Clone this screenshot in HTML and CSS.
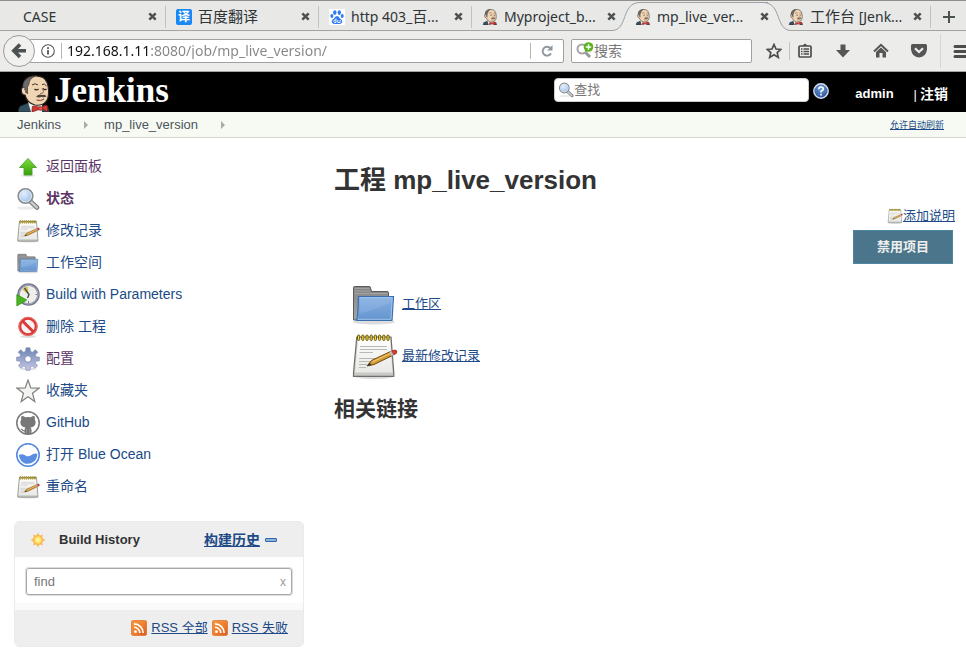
FILE: index.html
```html
<!DOCTYPE html>
<html lang="zh-CN">
<head>
<meta charset="utf-8">
<title>mp_live_version [Jenkins]</title>
<link rel="stylesheet" href="styles.css">
</head>
<body>
<svg class="defs" aria-hidden="true">
  <defs>
    <linearGradient id="g-green" x1="0" y1="0" x2="0" y2="1"><stop offset="0" stop-color="#7fdc3a"/><stop offset="1" stop-color="#37a00c"/></linearGradient>
    <linearGradient id="g-blue" x1="0" y1="0" x2="0" y2="1"><stop offset="0" stop-color="#86afdf"/><stop offset="1" stop-color="#6495cf"/></linearGradient>
    <linearGradient id="g-grey" x1="0" y1="0" x2="0" y2="1"><stop offset="0" stop-color="#858585"/><stop offset="1" stop-color="#a5a5a5"/></linearGradient>
    <linearGradient id="g-paper" x1="0" y1="0" x2="0" y2="1"><stop offset="0" stop-color="#fff"/><stop offset="1" stop-color="#e8e8e6"/></linearGradient>
    <linearGradient id="g-gear" gradientUnits="userSpaceOnUse" x1="0" y1="2" x2="0" y2="22"><stop offset="0" stop-color="#6f87b5"/><stop offset="1" stop-color="#c3c3e4"/></linearGradient>
    <linearGradient id="g-rss" x1="0" y1="0" x2="1" y2="1"><stop offset="0" stop-color="#f29a45"/><stop offset=".5" stop-color="#ef8130"/><stop offset="1" stop-color="#d9581f"/></linearGradient>
    <radialGradient id="g-lens" cx=".4" cy=".35" r=".7"><stop offset="0" stop-color="#e4f0ff"/><stop offset="1" stop-color="#94bbe8"/></radialGradient>
    <radialGradient id="g-sun"><stop offset="0" stop-color="#fffbc0"/><stop offset="1" stop-color="#fbd440"/></radialGradient>
    <radialGradient id="g-help" cx=".5" cy=".3" r=".8"><stop offset="0" stop-color="#6f9ad8"/><stop offset="1" stop-color="#204a8c"/></radialGradient>
  </defs>

  <symbol id="jenkins" viewBox="0 0 32 37">
    <path d="M0 37 L1.500 31.500 L10 28 L16 33 L24 30 L30 32 L31.500 37Z" fill="#335061" stroke="#1b2730" stroke-width=".8"/>
    <path d="M10 27 L13 37 H24 L24 30Z" fill="#f4f4f0"/>
    <path d="M5 12 Q5 4 11 2 Q18 -.5 25 2.500 Q30 6 30.500 15 Q31 24 27.500 27 Q24 31 17 30 Q9 28 7 20 Q3.500 20 3.500 16 Q3 13 5 12Z" fill="#efd5b4" stroke="#2d2622" stroke-width="1.100"/>
    <path d="M4.500 13 Q4.500 5 12 2 Q15 1 17 1.200 Q11 4 11 9 L9.500 12 L9.500 19 L7.500 16 L6.500 12Z" fill="#6d6b6d" stroke="#2d2622" stroke-width=".6"/>
    <path d="M6 14 Q8 15 7.500 18" fill="none" stroke="#9c6f53"/>
    <path d="M14 10 Q17 7.500 20 10 M24 9.500 Q26.500 8 28.500 11" fill="none" stroke="#4a3529" stroke-width="1"/>
    <path d="M16.500 14 Q18.500 16 20.500 13.800 M25 13.500 Q27 15.500 28.500 13.800" fill="none" stroke="#2b211c" stroke-width="1.200"/>
    <path d="M24 13 Q26.500 17 25 18 L22 18.500" fill="none" stroke="#a57356"/>
    <path d="M18 21.500 Q21.500 18.500 24 20 Q27.500 19 28.500 21.500 Q26 23 23.500 21.700 Q21 23.300 18 21.500Z" fill="#4d433c"/>
    <path d="M18.500 25 Q23 26.500 26 24" fill="none" stroke="#7e3b2f"/>
    <path d="M15.500 31 Q14 30 14 37 L21 34.500 L23.500 33 L29 37 Q30.500 30 28 30 L23 32.500Z" fill="#d33833" stroke="#7b1b18" stroke-width=".7"/>
    <circle cx="22.500" cy="33.500" r="2" fill="#e9534d" stroke="#7b1b18" stroke-width=".5"/>
  </symbol>

  <symbol id="close" viewBox="0 0 9 9"><path d="M1.300 1.300 L7.700 7.700 M7.700 1.300 L1.300 7.700" stroke="#4c5152" stroke-width="2.500" fill="none"/></symbol>

  <symbol id="lens" viewBox="0 0 24 24">
    <ellipse cx="10" cy="21" rx="9" ry="1.800" fill="#ececec"/>
    <path d="M14.500 14.500 L21 20.500" stroke="#777b7b" stroke-width="4.500" stroke-linecap="round"/>
    <path d="M14.500 14.500 L20.800 20.300" stroke="#c9cccc" stroke-width="2.500" stroke-linecap="round"/>
    <circle cx="9.500" cy="9" r="7.200" fill="url(#g-lens)" stroke="#888b8b" stroke-width="1.800"/>
    <circle cx="9.500" cy="9" r="6" fill="none" stroke="#f0f4f8" stroke-width=".8"/>
  </symbol>

  <symbol id="notepad" viewBox="0 0 48 48">
    <ellipse cx="24" cy="45" rx="18" ry="2" fill="#ddd"/>
    <path d="M6.800 5 H41 L43.800 41 V44.300 H3.500 V41Z" fill="#c9c9c6" stroke="#6f6f69" stroke-width="1.200"/>
    <path d="M8 6 H40 L42.500 40.500 H5Z" fill="url(#g-paper)"/>
    <path d="M10 14.500H37 M10 17.500H37 M9.500 20.500H23 M9 26.500H29 M9 29.500H23 M9 32.500H17 M9 35.500H16" stroke="#b8b8b4"/>
    <g fill="#efd43b" stroke="#6b5c10" stroke-width="1">
      <rect x="7.500" y="3" width="2.200" height="5.500" rx="1.100"/><rect x="11.700" y="3" width="2.200" height="5.500" rx="1.100"/>
      <rect x="15.900" y="3" width="2.200" height="5.500" rx="1.100"/><rect x="20.100" y="3" width="2.200" height="5.500" rx="1.100"/>
      <rect x="24.300" y="3" width="2.200" height="5.500" rx="1.100"/><rect x="28.500" y="3" width="2.200" height="5.500" rx="1.100"/>
      <rect x="32.700" y="3" width="2.200" height="5.500" rx="1.100"/><rect x="36.900" y="3" width="2.200" height="5.500" rx="1.100"/>
    </g>
    <path d="M17 34 L21.500 28.500 L40.500 19.500 L42.500 23.500 L24 32.500Z" fill="#d39a38" stroke="#6f4a12"/>
    <path d="M22.500 29.800 L40.800 21" stroke="#f0c36c" stroke-width="1.300"/>
    <path d="M17 34 L19.500 30.800 L21.500 33Z" fill="#3a2c1a"/>
    <path d="M41.500 19 Q46 17 46.800 19 Q47.600 21.500 43.500 23Z" fill="#dc3b2f" stroke="#8d2019" stroke-width=".7"/>
    <path d="M39.500 20 L41.500 19 L43.500 23 L41.500 24Z" fill="#b9c0c2"/>
  </symbol>

  <symbol id="folder" viewBox="0 0 48 48">
    <ellipse cx="24" cy="42" rx="21" ry="2.500" fill="#ddd"/>
    <path d="M3.500 40 V7.500 Q3.500 6.500 4.500 6.500 H19.500 Q20.500 6.500 20.500 8 L21.500 11.500 H37 Q38.500 11.500 38.500 13 V40Z" fill="url(#g-grey)" stroke="#5a5a5a"/>
    <path d="M4.500 8.500H19.500 M4.500 11H20 M4.500 13.500H37.500" stroke="#a8a8a8" stroke-width=".8"/>
    <path d="M8.500 16.500 H43.500 L42 40.500 H6 Q7.800 40 8.500 16.500Z" fill="url(#g-blue)" stroke="#3a6eae" stroke-width="1.200"/>
    <path d="M9.600 17.700 H42.200 L41 39.300 H8" fill="none" stroke="#a9c9ee" stroke-width=".8"/>
    <path d="M9.500 33 Q24 31 41.500 22 V18 H10Z" fill="#a2c3ea" opacity=".3"/>
  </symbol>

  <symbol id="up" viewBox="0 0 24 24">
    <ellipse cx="12" cy="20.500" rx="7" ry="1.500" fill="#e4e4e4"/>
    <path d="M12 3.500 L20.500 12.500 H16 V20 H8 V12.500 H3.500Z" fill="url(#g-green)" stroke="#4a9e2a" stroke-width=".9"/>
  </symbol>

  <symbol id="clock" viewBox="0 0 24 24">
    <circle cx="12.500" cy="11.500" r="10" fill="#eeeeea" stroke="#77778f" stroke-width="2.500"/>
    <circle cx="12.500" cy="11.500" r="9.500" fill="none" stroke="#b6b6cc" stroke-width=".8"/>
    <path d="M12.500 11.500 L6 6.500 A8 8 0 0 1 12 3.500Z" fill="#d7c65e"/>
    <path d="M8.500 5 L13 11.500 L11.500 15" fill="none" stroke="#4c4c43" stroke-width="1.400"/>
    <path d="M19.500 11.500h1.500 M12.500 18v2" stroke="#777"/>
    <path d="M.8 11.500 L10.800 17 L.8 23Z" fill="#48b51f" stroke="#2f8d10" stroke-width=".7"/>
  </symbol>

  <symbol id="deny" viewBox="0 0 24 24">
    <ellipse cx="12" cy="21.500" rx="8" ry="1.500" fill="#ddd"/>
    <circle cx="12" cy="11.500" r="8.200" fill="#f9f4f3" stroke="#d93a37" stroke-width="3"/>
    <path d="M6.200 5.700 L17.800 17.300" stroke="#d93a37" stroke-width="3"/>
    <circle cx="12" cy="11.500" r="9" fill="none" stroke="#ee8885" stroke-width=".7"/>
  </symbol>

  <symbol id="gear" viewBox="0 0 24 24">
    <ellipse cx="12" cy="22" rx="8" ry="1.500" fill="#e2e2e2"/>
    <path d="M10 .8H14L14.500 4.400L16.600 5.200L19.400 2.800L21.800 5.300L19.300 8L19.900 9.800L23.400 10.200V13.800L19.900 14.200L19.200 16L21.600 18.800L19 21.300L16.300 19L14.500 19.700L14 23.200H10L9.500 19.700L7.700 19L5 21.300L2.400 18.800L4.800 16L4.100 14.200L.6 13.800V10.200L4.100 9.800L4.700 8L2.200 5.300L4.600 2.800L7.400 5.200L9.500 4.400Z" fill="url(#g-gear)" stroke="#8490b8" stroke-width=".7"/>
    <circle cx="12" cy="12" r="3.300" fill="#fff" stroke="#7885ad" stroke-width=".9"/>
  </symbol>

  <symbol id="star" viewBox="0 0 24 24"><path d="M12 1 L14.800 9 L23 9.200 L16.500 14.200 L18.800 22.600 L12 17.800 L5.200 22.600 L7.500 14.200 L1 9.200 L9.200 9Z" fill="#f3f3f1" stroke="#7f807c" stroke-width="1.200"/></symbol>

  <symbol id="github" viewBox="0 0 24 24">
    <circle cx="12" cy="12" r="11.200" fill="#fff" stroke="#777" stroke-width="1.500"/>
    <path d="M5.500 5 Q8 5 9.300 6.300 Q12 5.700 14.700 6.300 Q16 5 18.500 5 Q19.200 7 18.700 8.300 Q20 10 19.500 12.500 Q18.800 16 14.500 16.500 Q15.500 17.500 15.500 19 V22.500 Q12 23.500 8.500 22.500 V20.500 Q6 20.500 5.200 18.500 L4.500 17.500 Q6.500 17.500 7 18.800 Q7.500 19.500 8.500 19.200 Q8.500 17.500 9.500 16.500 Q5.200 16 4.500 12.500 Q4 10 5.300 8.300 Q4.800 7 5.500 5Z" fill="#777"/>
    <path d="M10.500 18v4 M13.500 18v4" stroke="#9b9b9b" stroke-width=".7"/>
  </symbol>

  <symbol id="ocean" viewBox="0 0 24 24">
    <circle cx="12" cy="12" r="11.200" fill="#fff" stroke="#4f86dd" stroke-width="1.500"/>
    <path d="M2.800 12 Q6 10.200 9.500 12.500 Q12.500 14.300 15 12.300 Q18 9.800 21.300 10.800 Q21.500 15.500 18 18.600 Q14.500 21.500 9.500 20.700 Q4 19 2.800 12Z" fill="#5b8de2"/>
  </symbol>

  <symbol id="rss" viewBox="0 0 16 16">
    <rect x=".4" y=".4" width="15.200" height="15.200" rx="2" fill="url(#g-rss)" stroke="#e07029" stroke-width=".8"/>
    <circle cx="4.500" cy="11.700" r="1.400" fill="#fff"/>
    <path d="M3 7.300 A5.800 5.800 0 0 1 8.800 13.100 M3 3.900 A9.200 9.200 0 0 1 12.200 13.100" stroke="#fff" stroke-width="1.600" fill="none"/>
  </symbol>
</svg>

<header class="browser">
  <div class="tabs">
    <div class="tab"><button class="tab-title">CASE</button><button class="tab-close" aria-label="关闭"><svg><use href="#close"/></svg></button></div>
    <div class="tab"><span class="fanyi">译</span><button class="tab-title"><span class="cjk">百度翻译</span></button><button class="tab-close" aria-label="关闭"><svg><use href="#close"/></svg></button></div>
    <div class="tab"><svg class="favicon" viewBox="0 0 16 16"><rect width="16" height="16" fill="#fff"/><g fill="#2f7bef"><ellipse cx="5.800" cy="3.600" rx="1.700" ry="2.300"/><ellipse cx="10.300" cy="3.600" rx="1.700" ry="2.300"/><ellipse cx="2.900" cy="7" rx="1.500" ry="2"/><ellipse cx="13.200" cy="7" rx="1.500" ry="2"/><path d="M8 7 Q10 7 11 9.500 Q14 11.500 13 13.800 Q12 15.500 8 14.900 Q4 15.500 3 13.800 Q2 11.500 5 9.500 Q6 7 8 7Z"/></g><path d="M7 9.500v4H5.500q-1.500-1.300 0-2.500H7 M8.800 11v2.500H11.200V11" fill="none" stroke="#fff" stroke-width=".9"/></svg><button class="tab-title">http 403_<span class="cjk">百</span>...</button><button class="tab-close" aria-label="关闭"><svg><use href="#close"/></svg></button></div>
    <div class="tab before-active"><svg class="favicon"><use href="#jenkins"/></svg><button class="tab-title">Myproject_b...</button><button class="tab-close" aria-label="关闭"><svg><use href="#close"/></svg></button></div>
    <div class="tab active">
      <svg class="curve curve-left" viewBox="0 0 28 29"><path d="M0 29 V28.500 C16 28.500 9 .5 28 .5 V29Z" fill="#ececea"/><path d="M0 28.500 C16 28.500 9 .5 28 .5" fill="none" stroke="#9da0a8"/></svg>
      <svg class="curve curve-right" viewBox="0 0 28 29"><path d="M28 29 V28.500 C12 28.500 19 .5 0 .5 V29Z" fill="#ececea"/><path d="M28 28.500 C12 28.500 19 .5 0 .5" fill="none" stroke="#9da0a8"/></svg>
      <svg class="favicon"><use href="#jenkins"/></svg><button class="tab-title">mp_live_ver...</button><button class="tab-close" aria-label="关闭"><svg><use href="#close"/></svg></button></div>
    <div class="tab"><svg class="favicon"><use href="#jenkins"/></svg><button class="tab-title"><span class="cjk">工作台</span> [Jenk...</button><button class="tab-close" aria-label="关闭"><svg><use href="#close"/></svg></button></div>
    <button class="new-tab" aria-label="新标签页"><svg viewBox="0 0 12 12"><path d="M6 0V12M0 6H12" stroke="#4c5152" stroke-width="2"/></svg></button>
  </div>
  <div class="toolbar">
    <button class="back" aria-label="后退"><svg viewBox="0 0 16 16"><path d="M9 1.500 L2.800 7.800 L9 14 M3.500 7.800 H15" fill="none" stroke="#4c5152" stroke-width="3.600"/></svg></button>
    <div class="address">
      <svg class="info" viewBox="0 0 14 14"><circle cx="7" cy="7" r="6.300" fill="none" stroke="#555" stroke-width="1.100"/><path d="M7 6V10.500M7 3.200V4.900" stroke="#444" stroke-width="1.600"/></svg>
      <input class="url" aria-label="地址" value="192.168.1.11:8080/job/mp_live_version/">
      <button class="reload" aria-label="刷新"><svg viewBox="0 0 12 12"><path d="M9.300 3.200 A4.400 4.400 0 1 0 10 8.200" fill="none" stroke="#8f979d" stroke-width="1.900"/><path d="M11.500 0V5.500H6Z" fill="#8f979d"/></svg></button>
    </div>
    <div class="websearch">
      <svg viewBox="0 0 18 18"><path d="M8.500 9.500 L14 15" stroke="#999" stroke-width="3"/><circle cx="6" cy="7" r="4.500" fill="#fff" stroke="#a3a5a5" stroke-width="2"/><circle cx="12.500" cy="5" r="4.800" fill="#55b31c"/><path d="M12.500 2.300V7.700M9.800 5H15.200" stroke="#fff" stroke-width="1.500"/></svg>
      <input aria-label="搜索" placeholder="搜索">
    </div>
    <button class="tool" aria-label="收藏"><svg viewBox="0 0 16 16"><path d="M8 1.500 L10 6 L14.800 6.400 L11.200 9.600 L12.300 14.400 L8 11.800 L3.700 14.400 L4.800 9.600 L1.200 6.400 L6 6Z" fill="none" stroke="#4d4d4d" stroke-width="1.700"/></svg></button>
    <span class="split"></span>
    <button class="tool" aria-label="书签"><svg viewBox="0 0 16 16"><path d="M5 3 L8 .5 L11 3Z" fill="#4d4d4d"/><rect x="2" y="3" width="12" height="11" rx="1" fill="none" stroke="#4d4d4d" stroke-width="1.700"/><path d="M4 6H5.500M6.500 6H12M4 8.500H5.500M6.500 8.500H12M4 11H5.500M6.500 11H12" stroke="#4d4d4d" stroke-width="1.300"/></svg></button>
    <button class="tool spaced" aria-label="下载"><svg viewBox="0 0 16 16"><path d="M5.500 1.500H10.500V7H15L8 14.500L1 7H5.500Z" fill="#555"/></svg></button>
    <button class="tool spaced" aria-label="主页"><svg viewBox="0 0 16 16"><path d="M1 8.500 L8 1.800 L15 8.500" fill="none" stroke="#555" stroke-width="2"/><path d="M3 9 L8 4.500 L13 9 V14.500 H9.500 V10 H6.500 V14.500 H3Z" fill="#555"/></svg></button>
    <button class="tool spaced" aria-label="Pocket"><svg viewBox="0 0 16 16"><path d="M1.500 1 H14.500 Q16 1 16 2.500 V6.500 Q15 14 8 14.500 Q1 14 0 6.500 V2.500 Q0 1 1.500 1Z" fill="#555"/><path d="M4 5.200 L8 9 L12 5.200" fill="none" stroke="#eee" stroke-width="2.200"/></svg></button>
    <span class="split wide"></span>
    <button class="menu" aria-label="菜单"><svg viewBox="0 0 12 13"><path d="M1.500 1.500H12M1.500 6.500H12M1.500 11.500H12" stroke="#4d4d4d" stroke-width="3" stroke-linecap="round"/></svg></button>
  </div>
</header>

<header class="masthead">
  <a class="brand" href="#"><svg><use href="#jenkins"/></svg><span>Jenkins</span></a>
  <label class="finder"><svg><use href="#lens"/></svg><input aria-label="查找" placeholder="查找"></label>
  <a class="help" href="#" aria-label="帮助"><svg viewBox="0 0 16 16"><circle cx="8" cy="8" r="7.200" fill="url(#g-help)" stroke="#d4deee" stroke-width="1.400"/><path d="M5.700 6.200 Q5.800 4 8 4 Q10.300 4 10.300 6 Q10.300 7.300 8 8.300 V9.500 M8 10.800V12.500" fill="none" stroke="#fff" stroke-width="1.600"/></svg></a>
  <div class="login"><a href="#">admin</a><span>|<a class="logout" href="#">注销</a></span></div>
</header>

<nav class="crumbs">
  <a href="#">Jenkins</a><i></i><a href="#">mp_live_version</a><i></i>
  <a class="refresh" href="#">允许自动刷新</a>
</nav>

<div class="page">
  <aside class="side">
    <nav class="tasks">
      <a class="visited" href="#"><svg><use href="#up"/></svg>返回面板</a>
      <a class="visited current" href="#"><svg><use href="#lens"/></svg>状态</a>
      <a href="#"><svg><use href="#notepad"/></svg>修改记录</a>
      <a href="#"><svg><use href="#folder"/></svg>工作空间</a>
      <a href="#"><svg><use href="#clock"/></svg>Build with Parameters</a>
      <a href="#"><svg><use href="#deny"/></svg>删除 工程</a>
      <a class="visited" href="#"><svg><use href="#gear"/></svg>配置</a>
      <a href="#"><svg><use href="#star"/></svg>收藏夹</a>
      <a href="#"><svg><use href="#github"/></svg>GitHub</a>
      <a href="#"><svg><use href="#ocean"/></svg>打开 Blue Ocean</a>
      <a href="#"><svg><use href="#notepad"/></svg>重命名</a>
    </nav>
    <section class="history">
      <div class="history-head">
        <svg class="sun" viewBox="0 0 16 16"><path d="M8 .5 L9.600 3.400 L13 2.700 L12.300 6 L15.500 8 L12.300 10 L13 13.300 L9.600 12.600 L8 15.500 L6.400 12.600 L3 13.300 L3.700 10 L.5 8 L3.700 6 L3 2.700 L6.400 3.400Z" fill="#f8bd62"/><circle cx="8" cy="8" r="4.300" fill="url(#g-sun)" stroke="#f3ad4c" stroke-width=".7"/></svg>
        <h2>Build History</h2>
        <a href="#">构建历史</a>
        <button class="collapse" aria-label="折叠"></button>
      </div>
      <div class="history-body"><div class="filter"><input aria-label="find" placeholder="find"><button aria-label="清除">x</button></div></div>
      <div class="history-foot">
        <a href="#"><svg><use href="#rss"/></svg><span>RSS 全部</span></a>
        <a href="#"><svg><use href="#rss"/></svg><span>RSS 失败</span></a>
      </div>
    </section>
  </aside>

  <main class="main">
    <h1>工程 mp_live_version</h1>
    <div class="actions">
      <a class="describe" href="#"><svg><use href="#notepad"/></svg><span>添加说明</span></a>
      <button class="disable">禁用项目</button>
    </div>
    <div class="shortcuts">
      <a href="#"><svg><use href="#folder"/></svg><span>工作区</span></a>
      <a href="#"><svg><use href="#notepad"/></svg><span>最新修改记录</span></a>
    </div>
    <h2>相关链接</h2>
  </main>
</div>
</body>
</html>
```
FILE: styles.css
```css
* { box-sizing: border-box; }

body {
  margin: 0;
  background: #fff;
  color: #333;
  font: 13px/18px "Liberation Sans", "Noto Sans CJK SC", sans-serif;
  overflow-x: hidden;
}

h1, h2 { margin: 0; }
a { color: #204a87; }
svg { display: block; flex: none; }
.defs { position: absolute; width: 0; height: 0; }

button {
  padding: 0;
  border: 0;
  background: none;
  color: inherit;
  font: inherit;
}

input {
  min-width: 0;
  padding: 0;
  border: 0;
  outline: 0;
  background: none;
  font: inherit;
}

input::placeholder { color: #777; opacity: 1; }

/* Browser chrome */
.browser {
  background: #ececea;
  color: #2e3436;
  font: 14px/20px "Noto Sans", "Noto Sans CJK SC", sans-serif;
}

.tabs {
  display: flex;
  height: 31px;
  padding-left: 13px;
  border-top: 1px solid #8f8f8a;
  border-bottom: 1px solid #a3a39f;
  background: #e8e8e6;
}

.tab {
  position: relative;
  display: flex;
  flex: 1;
  align-items: center;
  gap: 6px;
  min-width: 0;
  padding: 2px 9px 0 10px;
}

.tab::after {
  content: "";
  position: absolute;
  right: 0;
  top: 5px;
  bottom: 2px;
  border-right: 1px solid #c2c2bf;
}

.tab.active::after, .tab.before-active::after { display: none; }

.tab.active::before {
  content: "";
  position: absolute;
  inset: 1px 10px -1px 15px;
  border-top: 1px solid #9da0a8;
  background: #ececea;
}

.tab > * { position: relative; }
.favicon { width: 16px; height: 16px; }

.fanyi {
  width: 16px;
  height: 16px;
  border-radius: 2px;
  background: #1b87f5;
  color: #fff;
  font-size: 12px;
  font-weight: bold;
  line-height: 16px;
  text-align: center;
}

.tab .curve { position: absolute; top: 1px; width: 28px; height: 29px; }
.curve-left { left: -13px; }
.curve-right { right: -13px; }

.tab-title {
  flex: 1;
  min-width: 0;
  text-align: left;
  white-space: nowrap;
}

.cjk { font-size: 15px; }
.tab-close svg { width: 9px; height: 9px; }

.new-tab {
  display: grid;
  place-items: center;
  width: 35px;
  padding-top: 2px;
}

.new-tab svg { width: 12px; height: 12px; }

.toolbar {
  display: flex;
  align-items: center;
  height: 41px;
  padding-left: 3px;
  border-bottom: 1px solid #a3a39f;
}

.back {
  position: relative;
  z-index: 1;
  display: grid;
  place-items: center;
  width: 32px;
  height: 32px;
  border: 1px solid #9a9a96;
  border-radius: 50%;
  background: #f1f1ef;
}

.back svg { width: 16px; height: 16px; }

.address, .websearch {
  display: flex;
  align-items: center;
  height: 24px;
  border: 1px solid #a0a09c;
  border-radius: 2px;
  background: #fff;
}

.address { flex: 1; margin-left: -6px; padding-left: 11px; }
.info { width: 14px; height: 14px; margin-right: 6px; }

.url {
  flex: 1;
  height: 16px;
  padding-left: 5px;
  border-left: 1px solid #b5b5b2;
  background: linear-gradient(90deg, #111 84px, #858585 84px) content-box text;
  color: transparent;
}

.reload {
  display: grid;
  place-items: center;
  width: 33px;
  height: 16px;
  border-left: 1px solid #b5b5b2;
}

.reload svg { width: 12px; height: 12px; }

.websearch { width: 181px; margin: 0 7px; padding-left: 4px; }
.websearch svg { width: 18px; height: 18px; }
.websearch input { flex: 1; }

.tool {
  display: grid;
  place-items: center;
  width: 30px;
  height: 30px;
}

.tool svg { width: 16px; height: 16px; }
.tool.spaced { margin-left: 8px; }
.split { width: 1px; height: 18px; background: #c2c2bf; }
.split.wide { height: 34px; margin: 0 12px 0 6px; background: #d6d6d3; }
.menu svg { width: 13px; height: 13px; }

/* Jenkins header */
.masthead {
  display: flex;
  align-items: center;
  height: 40px;
  padding: 0 18px;
  background: #000;
}

.brand {
  display: flex;
  flex: 1;
  gap: 4px;
  align-self: stretch;
  color: #fff;
  font: bold 35px/38px "Liberation Serif", serif;
  text-decoration: none;
}

.brand svg { align-self: flex-end; width: 32px; height: 37px; }

.finder {
  display: flex;
  align-items: center;
  width: 255px;
  height: 24px;
  margin-bottom: 4px;
  padding-left: 3px;
  border: 1px solid #ccc;
  border-radius: 4px;
  background: #fff;
}

.finder svg { width: 16px; height: 16px; }
.finder input { flex: 1; }
.help { margin: 0 26px 3px 4px; }
.help svg { width: 16px; height: 16px; }

.login {
  display: flex;
  gap: 20px;
  padding-top: 4px;
  color: #fff;
}

.login a { color: #fff; font-weight: bold; text-decoration: none; }
.login .logout { margin-left: 3px; font-size: 14px; }

.crumbs {
  display: flex;
  align-items: center;
  height: 26px;
  padding: 1px 22px 0 17px;
  border-bottom: 1px solid #d3d7cf;
  background: #f6faf2;
}

.crumbs a { color: #4d545d; text-decoration: none; }

.crumbs i {
  margin: 0 16px 0 23px;
  border: 4px solid transparent;
  border-right: 0;
  border-left-color: #aaa;
}

.crumbs .refresh {
  margin-left: auto;
  color: #204a87;
  font-size: 9px;
  text-decoration: underline;
}

/* Page */
.page { display: flex; }
.side { width: 304px; padding: 12px 0 16px 14px; }

.tasks { padding-left: 2px; font-size: 14px; }

.tasks a {
  display: flex;
  align-items: center;
  gap: 6px;
  height: 32px;
  text-decoration: none;
}

.tasks svg { width: 24px; height: 24px; margin-top: 2px; }
.tasks .visited { color: #5c3566; }
.tasks .current { font-weight: bold; }

.history {
  margin-top: 19px;
  border: 1px solid #ebebeb;
  border-radius: 5px;
  overflow: hidden;
}

.history-head {
  display: flex;
  align-items: center;
  height: 35px;
  padding: 0 26px 0 15px;
  background: #eee;
}

.sun { width: 16px; height: 16px; }
.history-head h2 { flex: 1; margin-left: 13px; font-size: 13px; line-height: 18px; }
.history-head a { font-size: 14px; font-weight: bold; }

.collapse {
  width: 12px;
  height: 4px;
  margin-left: 5px;
  border: 1px solid #3465a4;
  border-radius: 1px;
  background: #8fb3e0;
}

.history-body { padding: 11px 11px 8px; border-bottom: 7px solid #fafafa; }

.filter {
  display: flex;
  align-items: center;
  height: 27px;
  padding: 0 5px 0 7px;
  border: 1px solid #a8a8a6;
  border-radius: 3px;
  box-shadow: 0 0 0 1px #dcdcda;
}

.filter input { flex: 1; }
.filter button { color: #999; font-size: 12px; }

.history-foot {
  display: flex;
  gap: 4px;
  align-items: center;
  justify-content: flex-end;
  height: 36px;
  padding-right: 15px;
  background: #eee;
}

.history-foot a { display: flex; align-items: center; gap: 4px; text-decoration: none; }
.history-foot svg { width: 16px; height: 16px; }
.history-foot span, .describe span, .shortcuts span { text-decoration: underline; }

.main { flex: 1; min-width: 0; padding: 22px 11px 16px 30px; }
.main h1 { font-size: 26px; line-height: 40px; }

.actions {
  display: flex;
  flex-direction: column;
  align-items: flex-end;
  gap: 5px;
  padding-top: 7px;
}

.describe { display: flex; align-items: center; text-decoration: none; }
.describe svg { width: 16px; height: 16px; }

.disable {
  width: 100px;
  height: 34px;
  margin-right: 2px;
  border: 1px solid #4d87a3;
  background: #4b758b;
  color: #eee;
  font-weight: bold;
}

.shortcuts { display: grid; gap: 4px; padding: 16px 0 0 16px; }

.shortcuts a {
  display: flex;
  align-items: center;
  gap: 4px;
  text-decoration: none;
}

.shortcuts svg { width: 48px; height: 48px; }
.main h2 { margin-top: 14px; font-size: 21px; line-height: 30px; }
```
